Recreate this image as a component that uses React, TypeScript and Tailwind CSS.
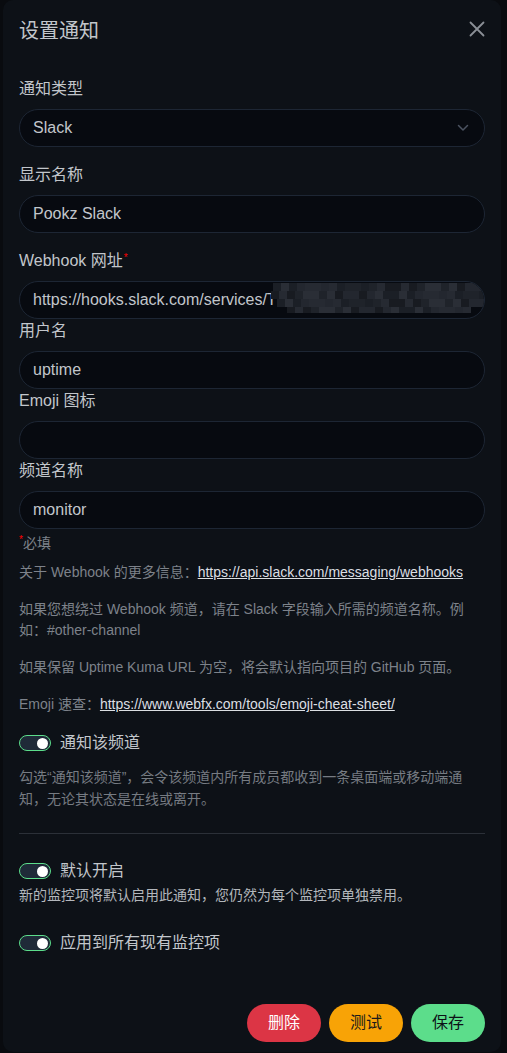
import React from "react";

const mosaicPalette = [
  "bg-[#1b1f26]",
  "bg-[#23272f]",
  "bg-[#2a2e36]",
  "bg-[#181b21]",
  "bg-[#1f232a]",
  "bg-[#262a32]",
];

function Mosaic() {
  const rows = [
    { start: 272, end: 483, h: 8 },
    { start: 270, end: 485, h: 8 },
    { start: 276, end: 485, h: 8 },
    { start: 286, end: 470, h: 6 },
  ];
  return (
    <div className="absolute left-0 top-[1px] flex flex-col pointer-events-none">
      {rows.map((r, ri) => {
        const cells = Math.ceil((r.end - r.start) / 8);
        return (
          <div key={ri} className="flex" style={{ marginLeft: r.start - 19, height: r.h }}>
            {Array.from({ length: cells }).map((_, ci) => {
              const cls = mosaicPalette[(ci * 7 + ri * 3 + ((ci * ci) % 5)) % mosaicPalette.length];
              return <div key={ci} className={`w-[8px] h-full ${cls}`} />;
            })}
          </div>
        );
      })}
    </div>
  );
}

function Label({ children }: { children: React.ReactNode }) {
  return <div className="text-base leading-6 text-[#c2c6cb]">{children}</div>;
}

function Input({ value, children }: { value?: string; children?: React.ReactNode }) {
  return (
    <div className="relative h-[38px] rounded-full border border-[#1d2634] bg-[#070a10] px-[13px] flex items-center text-base text-[#c2c6cb] overflow-hidden">
      <span className="whitespace-nowrap">{value}</span>
      {children}
    </div>
  );
}

function Toggle({ label }: { label: string }) {
  return (
    <div className="flex items-center h-6">
      <div className="w-8 h-4 rounded-full border border-[#5cdd8b] bg-[#1f2a38] flex items-center justify-end pr-[2px]">
        <div className="w-[11px] h-[11px] rounded-full bg-white" />
      </div>
      <span className="ml-[9px] text-base leading-6 text-[#c2c6cb]">{label}</span>
    </div>
  );
}

export default function App() {
  return (
    <div className="min-h-[1053px] bg-[#090b0f] pl-[3px] pr-[6px] font-['Liberation_Sans','Noto_Sans_CJK_SC',sans-serif]">
      <div className="h-[1052px] rounded-[10px] bg-[#0d1117] flex flex-col">
        <div className="h-[62px] px-4 flex items-center justify-between">
          <div className="text-[20px] leading-[30px] text-[#c2c6cb]">设置通知</div>
          <svg width="16" height="16" viewBox="0 0 16 16" className="mb-[4px]">
            <path d="M1.5 1.5 L14.5 14.5 M14.5 1.5 L1.5 14.5" stroke="#8a8f96" strokeWidth="1.8" strokeLinecap="round" />
          </svg>
        </div>
        <div className="px-4 pt-[15px] flex flex-col">
          <Label>通知类型</Label>
          <div className="mt-2 h-[38px] rounded-full border border-[#1d2634] bg-[#070a10] px-[13px] flex items-center justify-between text-base text-[#c2c6cb]">
            <span>Slack</span>
            <svg width="12" height="8" viewBox="0 0 12 8" className="mr-[2px]">
              <path d="M1.5 1.5 L6 6 L10.5 1.5" stroke="#4b5361" strokeWidth="1.5" fill="none" strokeLinecap="round" strokeLinejoin="round" />
            </svg>
          </div>

          <div className="mt-4">
            <Label>显示名称</Label>
          </div>
          <div className="mt-2">
            <Input value="Pookz Slack" />
          </div>

          <div className="mt-4">
            <Label>
              Webhook 网址<sup className="text-[red] text-[10px] ml-[1px]">*</sup>
            </Label>
          </div>
          <div className="mt-2">
            <Input value="https://hooks.slack.com/services/T">
              <Mosaic />
            </Input>
          </div>

          <Label>用户名</Label>
          <div className="mt-2">
            <Input value="uptime" />
          </div>

          <Label>Emoji 图标</Label>
          <div className="mt-2">
            <Input value="" />
          </div>

          <Label>频道名称</Label>
          <div className="mt-2">
            <Input value="monitor" />
          </div>

          <div className="mt-1 text-sm leading-[21px] text-[#7d828a]">
            <div>
              <sup className="text-[red] text-[10px]">*</sup>必填
            </div>
            <p className="mt-2">
              关于 Webhook 的更多信息：
              <span className="underline text-[#dcdfe3]">https://api.slack.com/messaging/webhooks</span>
            </p>
            <p className="mt-4">
              如果您想绕过 Webhook 频道，请在 Slack 字段输入所需的频道名称。例如：#other-channel
            </p>
            <p className="mt-4">如果保留 Uptime Kuma URL 为空，将会默认指向项目的 GitHub 页面。</p>
            <p className="mt-4">
              Emoji 速查：
              <span className="underline text-[#dcdfe3]">https://www.webfx.com/tools/emoji-cheat-sheet/</span>
            </p>
          </div>

          <div className="mt-4">
            <Toggle label="通知该频道" />
          </div>
          <div className="mt-[11px] text-sm leading-[22px] text-[#767b82]">
            勾选“通知该频道”，会令该频道内所有成员都收到一条桌面端或移动端通知，无论其状态是在线或离开。
          </div>

          <div className="mt-[23px] h-px bg-[#2b3038]" />

          <div className="mt-[25px]">
            <Toggle label="默认开启" />
          </div>
          <div className="mt-[2px] text-sm leading-[21px] text-[#b3b7bc]">
            新的监控项将默认启用此通知，您仍然为每个监控项单独禁用。
          </div>

          <div className="mt-[25px]">
            <Toggle label="应用到所有现有监控项" />
          </div>
        </div>

        <div className="mt-auto px-4 pb-[10px] flex justify-end gap-2">
          <div className="w-[74px] h-[38px] rounded-full bg-[#dc3545] flex items-center justify-center text-base text-white">
            删除
          </div>
          <div className="w-[74px] h-[38px] rounded-full bg-[#f8a306] flex items-center justify-center text-base text-[#1a1a1a]">
            测试
          </div>
          <div className="w-[74px] h-[38px] rounded-full bg-[#5cdd8b] flex items-center justify-center text-base text-[#0d1117]">
            保存
          </div>
        </div>
      </div>
    </div>
  );
}
